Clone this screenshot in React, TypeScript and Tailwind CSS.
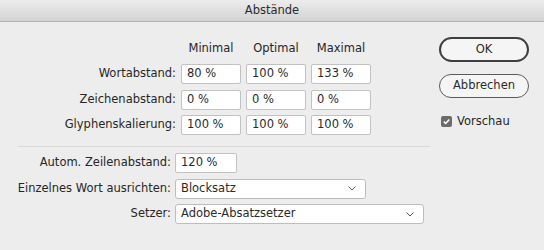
import React from "react";

const rows = [
  { label: "Wortabstand:", values: ["80 %", "100 %", "133 %"] },
  { label: "Zeichenabstand:", values: ["0 %", "0 %", "0 %"] },
  { label: "Glyphenskalierung:", values: ["100 %", "100 %", "100 %"] },
];

const Chevron = () => (
  <svg width="8" height="5" viewBox="0 0 8 5" className="shrink-0">
    <path d="M0.5 0.5 L4 4 L7.5 0.5" fill="none" stroke="#555" strokeWidth="1" />
  </svg>
);

const Field = ({ value, w = "w-[60px]" }: { value: string; w?: string }) => (
  <div
    className={`${w} h-[20px] bg-white border border-[#c2c2c2] rounded-[2px] px-[5px] flex items-center text-[#2a2a2a]`}
  >
    {value}
  </div>
);

const Select = ({ value, w }: { value: string; w: string }) => (
  <div
    className={`${w} h-[20px] bg-white border border-[#bdbdbd] rounded-[3px] pl-[5px] pr-[9px] flex items-center justify-between text-[#2a2a2a]`}
  >
    <span>{value}</span>
    <Chevron />
  </div>
);

const App = () => {
  return (
    <div className="w-[544px] h-[250px] bg-[#ededed] font-['DejaVu_Sans',sans-serif] text-[11.5px] text-[#262626] flex flex-col overflow-hidden">
      <div className="h-[22px] shrink-0 bg-gradient-to-b from-[#ececec] to-[#d3d3d3] border-b border-[#b3b3b3] flex items-center justify-center text-[#2b2b2b]">
        Abstände
      </div>
      <div className="flex">
        <div className="w-[439px]">
          <div className="flex pl-[181px] gap-[5px] pt-[18px] h-[34px]">
            {["Minimal", "Optimal", "Maximal"].map((h) => (
              <div key={h} className="w-[60px] text-center leading-[16px]">
                {h}
              </div>
            ))}
          </div>
          <div className="mt-[8px] flex flex-col gap-y-[5.5px]">
            {rows.map((r) => (
              <div key={r.label} className="flex items-center">
                <div className="w-[181px] pr-[5px] text-right">{r.label}</div>
                <div className="flex gap-[5px]">
                  {r.values.map((v, i) => (
                    <Field key={i} value={v} />
                  ))}
                </div>
              </div>
            ))}
          </div>
          <div className="mt-[11px] ml-[18px] w-[412px] h-px bg-[#d7d7d7]" />
          <div className="mt-[6px] flex flex-col gap-y-[5.5px]">
            <div className="flex items-center">
              <div className="w-[175px] pr-[4px] text-right">Autom. Zeilenabstand:</div>
              <Field value="120 %" w="w-[62px]" />
            </div>
            <div className="flex items-center">
              <div className="w-[175px] pr-[4px] text-right">Einzelnes Wort ausrichten:</div>
              <Select value="Blocksatz" w="w-[191px]" />
            </div>
            <div className="flex items-center">
              <div className="w-[175px] pr-[4px] text-right">Setzer:</div>
              <Select value="Adobe-Absatzsetzer" w="w-[249px]" />
            </div>
          </div>
        </div>
        <div className="pt-[15px] flex flex-col">
          <button className="w-[90px] h-[25px] rounded-full border-2 border-[#3f3f3f] bg-[#f5f5f5] text-[#2a2a2a] flex items-center justify-center">
            OK
          </button>
          <button className="mt-[12px] w-[90px] h-[24px] rounded-full border border-[#5a5a5a] bg-[#f5f5f5] text-[#2a2a2a] flex items-center justify-center">
            Abbrechen
          </button>
          <label className="mt-[15px] ml-[2px] flex items-center gap-[5px]">
            <span className="w-[11px] h-[11px] rounded-[2px] bg-[#6b6b6b] flex items-center justify-center">
              <svg width="9" height="9" viewBox="0 0 9 9">
                <path d="M1.8 4.6 L3.7 6.5 L7.3 2.4" fill="none" stroke="#fff" strokeWidth="1.5" />
              </svg>
            </span>
            <span>Vorschau</span>
          </label>
        </div>
      </div>
    </div>
  );
};

export default App;
